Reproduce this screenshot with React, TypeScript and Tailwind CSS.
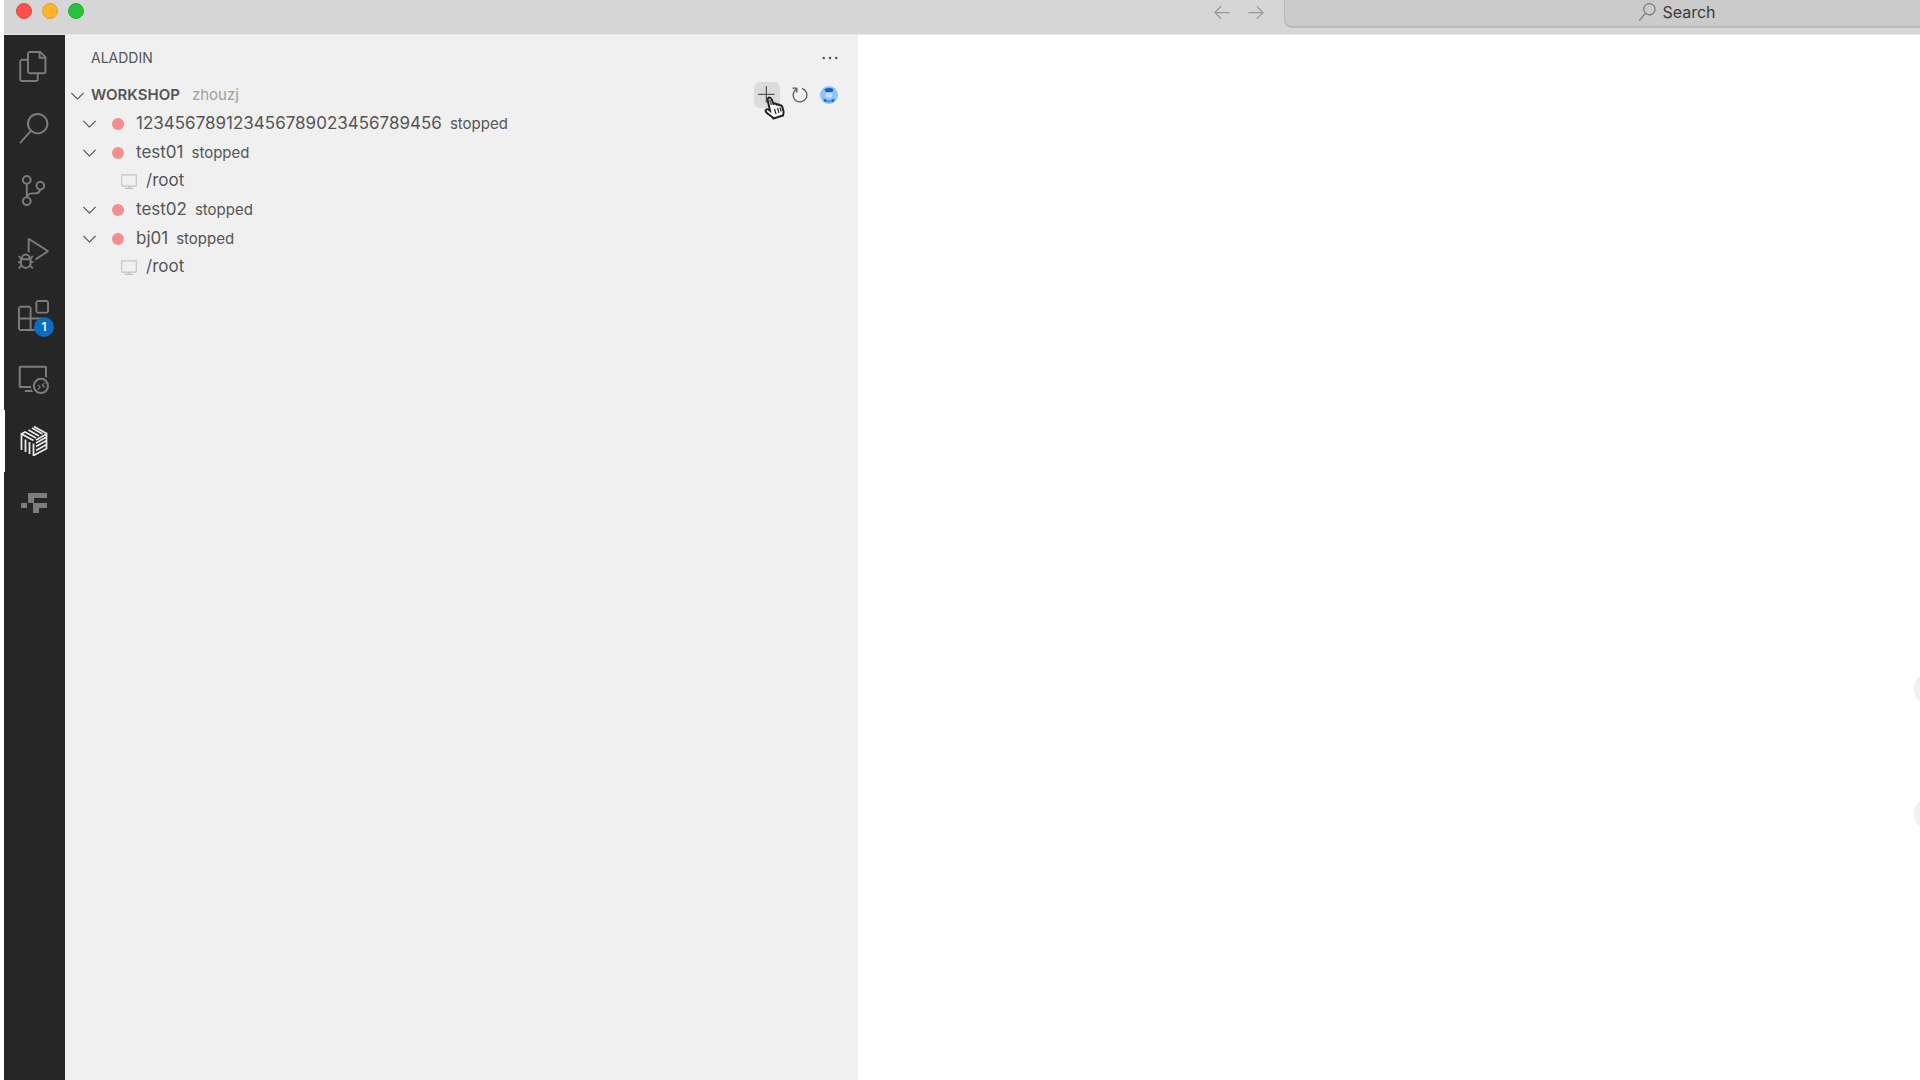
import {
  VscAdd,
  VscArrowLeft,
  VscArrowRight,
  VscChevronDown,
  VscDebugAlt,
  VscEllipsis,
  VscExtensions,
  VscFiles,
  VscRefresh,
  VscRemoteExplorer,
  VscSearch,
  VscSourceControl,
  VscVm,
} from "react-icons/vsc";
import clsx from "clsx";

function CubeIcon({ className }: { className?: string }) {
  return (
    <svg viewBox="0 0 28 32" className={className} fill="none" stroke="currentColor" strokeWidth="1.800">
      <path d="M1.500 25V9l12 6.500" />
      <path d="M5.500 27V14.500M9.500 29V17M13.500 31V18.500" />
      <path d="M13.500 30.500 26.500 23.500V9L16 15M16 25.500l10.500-6M16 21.500l10.500-6M16 18l10.500-6" />
      <path d="M1.500 9 5 7l11 6M8.500 5l10.500 6M12 3l10.500 6M14 1.500 26.500 8.500" />
    </svg>
  );
}

function FlagIcon({ className }: { className?: string }) {
  return (
    <svg viewBox="0 0 26 20" className={className} fill="currentColor">
      <path d="M7 0h19v5H13v5H7z" />
      <path d="M0 10h6v5H0z" />
      <path d="M12 10h14v5h-8v5h-6z" />
    </svg>
  );
}

function AvatarIcon() {
  return (
    <svg viewBox="0 0 18 18" className="size-[18px]">
      <circle cx="9" cy="9" r="9" fill="#8fc4fa" />
      <path d="M4.500 3Q9 1 13.500 3L12.500 6h-7z" fill="#1763c6" />
      <rect x="5.500" y="7" width="7" height="4.500" rx="2" fill="#c4e2fc" />
      <path d="M3.500 12.500 7 14l-1 2.500L4 15zM14.500 12.500 11 14l1 2.500 2-1.500z" fill="#1763c6" />
      <path d="M7 14h4v2.500H7z" fill="#4d9bee" />
    </svg>
  );
}

function HandCursor({ className }: { className?: string }) {
  return (
    <svg viewBox="0 0 22 24" className={className} aria-hidden>
      <path
        d="M4 2.500C5 1 7 1.500 7.500 3L9.500 8c1-.8 2.500-.5 3 .6 1-.7 2.300-.3 2.800.7 1.300-.5 2.500.2 3 1.700l1.200 4c.4 1.500-.3 3-.5 4.500l-9.500 3c-1-2-4.500-3.500-6.500-5.500-1-1-2-2.500-1-3.300 1-.8 2.800 0 4 1L4 5.500C3.600 4.500 3.500 3.300 4 2.500z"
        fill="#fff"
        stroke="#222"
        strokeWidth="2"
      />
      <path d="M5.500 3.500l2 5.500" stroke="#777" strokeWidth="2" />
      <path d="M10.500 13l1.500 5M13.500 12l1.500 5M16 11.500l1.200 4" stroke="#222" strokeWidth="1.200" />
    </svg>
  );
}

const ACTIVITIES = [
  { label: "Explorer", icon: VscFiles, size: "size-[31px]" },
  { label: "Search", icon: VscSearch, size: "size-[31px]" },
  { label: "Source Control", icon: VscSourceControl, size: "size-[31px]" },
  { label: "Run and Debug", icon: VscDebugAlt, size: "size-[31px]" },
  { label: "Extensions", icon: VscExtensions, size: "size-[31px]", badge: 1 },
  { label: "Remote Explorer", icon: VscRemoteExplorer, size: "size-[31px]" },
  { label: "Aladdin", icon: CubeIcon, size: "h-8 w-7", active: true },
  { label: "Flow", icon: FlagIcon, size: "h-5 w-[26px]" },
];

const WORKSHOPS = [
  { name: "123456789123456789023456789456", status: "stopped", folders: [] },
  { name: "test01", status: "stopped", folders: ["/root"] },
  { name: "test02", status: "stopped", folders: [] },
  { name: "bj01", status: "stopped", folders: ["/root"] },
];

function TitleBar() {
  return (
    <header className="flex h-[35px] shrink-0 items-start overflow-hidden border-b border-[#e8e8e8] bg-[#d6d6d6]">
      <div className="flex gap-2.5 pt-[3px] pl-3">
        <button aria-label="Close" className="size-4 rounded-full border border-[#e0443e] bg-[#fc524d]" />
        <button aria-label="Minimize" className="size-4 rounded-full border border-[#dfa023] bg-[#fdb32b]" />
        <button aria-label="Zoom" className="size-4 rounded-full border border-[#1fae2f] bg-[#27c13c]" />
      </div>
      <nav className="mr-[18px] ml-auto flex gap-3.5 pt-0.5 text-[#999999]">
        <button aria-label="Go back">
          <VscArrowLeft className="size-5" />
        </button>
        <button aria-label="Go forward">
          <VscArrowRight className="size-5" />
        </button>
      </nav>
      <button className="-mr-[150px] flex h-7 w-[786px] shrink-0 items-center justify-center gap-1.5 rounded-b-lg border-x border-b-2 border-[#b9b9b9] bg-[#cbcbcb] pb-0.5 text-base text-[#3a3a3a]">
        <VscSearch className="size-[18px] text-[#777777]" />
        Search
      </button>
    </header>
  );
}

function ActivityBar() {
  return (
    <nav className="w-[61px] shrink-0 bg-[#262626]">
      <div className="flex h-[499px] flex-col justify-between">
        {ACTIVITIES.map((item) => (
          <button
            key={item.label}
            aria-label={item.label}
            className={clsx(
              "relative flex h-[62px] items-center justify-center pr-0.5",
              item.active ? "text-[#e8e8e8]" : "text-[#7c7c7c]"
            )}
          >
            {item.active && <span className="absolute inset-y-0 left-0 w-px bg-white" />}
            <item.icon className={item.size} />
            {item.badge && (
              <span className="absolute right-[11px] bottom-2.5 flex size-5 items-center justify-center rounded-full bg-[#0a6cc4] text-xs font-semibold text-white">
                {item.badge}
              </span>
            )}
          </button>
        ))}
      </div>
    </nav>
  );
}

function SideBar() {
  return (
    <aside className="w-[793px] shrink-0 bg-[#f0f0f0] text-[#555555]">
      <div className="flex h-[46px] items-center justify-between pr-[18px] pl-[26px]">
        <h2 className="text-sm">ALADDIN</h2>
        <button aria-label="More actions">
          <VscEllipsis className="size-5 stroke-current" />
        </button>
      </div>

      <div className="flex h-7 items-center pr-5 pl-0.5">
        <button className="flex items-center gap-[3px] text-[15px] font-semibold">
          <VscChevronDown className="size-[21px]" />
          WORKSHOP
        </button>
        <span className="ml-3 text-[15px] text-[#a0a0a0]">zhouzj</span>
        <div className="ml-auto flex items-center gap-2">
          <button aria-label="Add workshop" className="relative rounded-md bg-[#dcdcdc] p-[3px]">
            <VscAdd className="size-5" />
            <HandCursor className="absolute top-3.5 left-2.5 h-6 w-[22px]" />
          </button>
          <button aria-label="Refresh" className="p-0.5">
            <VscRefresh className="size-5" />
          </button>
          <button aria-label="Account">
            <AvatarIcon />
          </button>
        </div>
      </div>

      <ul>
        {WORKSHOPS.map((workshop) => (
          <li key={workshop.name}>
            <button className="flex h-[29px] items-center pl-3.5">
              <VscChevronDown className="size-[21px]" />
              <span className="ml-3 size-3 rounded-full bg-[#f48e8e]" />
              <span className="ml-3 flex items-baseline gap-2 text-[17px]">
                {workshop.name}
                <span className="text-[15px]">{workshop.status}</span>
              </span>
            </button>
            {workshop.folders.map((folder) => (
              <button key={folder} className="flex h-7 items-center gap-2 pl-[55px] text-[17px]">
                <VscVm className="size-[18px] text-[#c4c4c4]" />
                {folder}
              </button>
            ))}
          </li>
        ))}
      </ul>
    </aside>
  );
}

export default function App() {
  return (
    <div className="flex h-screen flex-col overflow-hidden bg-white pl-1 font-['Inter',sans-serif]">
      <TitleBar />
      <div className="flex min-h-0 flex-1">
        <ActivityBar />
        <SideBar />
        <main className="relative flex-1 overflow-hidden bg-white">
          <div className="absolute top-[637px] -right-7 flex flex-col gap-[91px]">
            <span className="size-[34px] rounded-full bg-[#f0f0f0]" />
            <span className="size-[34px] rounded-full bg-[#f0f0f0]" />
          </div>
        </main>
      </div>
    </div>
  );
}
